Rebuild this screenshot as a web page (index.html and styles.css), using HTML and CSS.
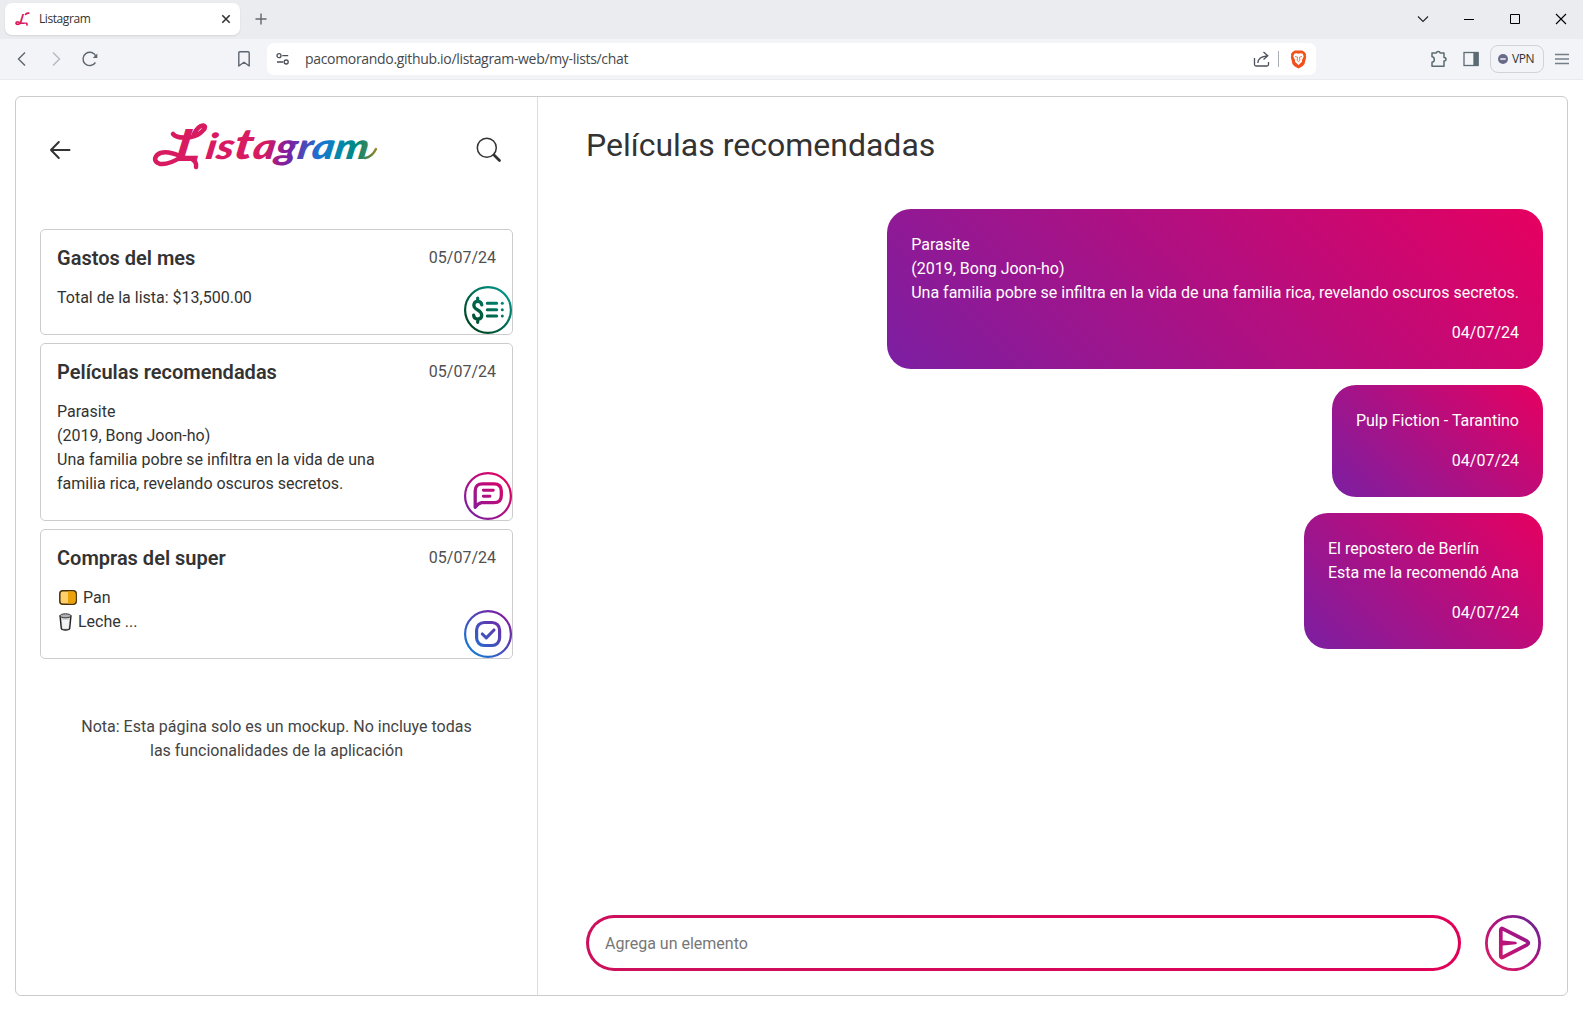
FILE: index.html
```html
<!DOCTYPE html>
<html lang="es">
<head>
<meta charset="utf-8">
<title>Listagram</title>
<link rel="stylesheet" href="styles.css">
</head>
<body>
<div class="tabstrip">
  <div class="tab">
    <svg class="favicon" width="16" height="16" viewBox="0 0 16 16" fill="none" stroke="#d81b60" stroke-width="1.7" stroke-linecap="round"><text class="mark" x="6" y="12.5" transform="skewX(-10)">L</text><path d="M13.8 2.2Q12 2 10.600 3.400M4 11.300Q1 10.300 1 12.200Q1.500 14.400 5.500 12.200M11 12.200Q12.300 12.500 12 14"/></svg>
    <span class="tab-title">Listagram</span>
    <svg width="10" height="10" viewBox="0 0 10 10" stroke="#333" stroke-width="1.6"><path d="M1.3 1.3L8.7 8.7M8.7 1.3L1.3 8.7"/></svg>
  </div>
  <svg class="newtab" width="12" height="12" viewBox="0 0 12 12" stroke="#62666d" stroke-width="1.4"><path d="M6 .5V11.5M.5 6H11.5"/></svg>
  <div class="window-controls">
    <svg width="12" height="12" viewBox="0 0 12 12" fill="none" stroke="#222" stroke-width="1.1"><path d="M1 3.5L6 8.5L11 3.5"/></svg>
    <svg width="12" height="12" viewBox="0 0 12 12" stroke="#000"><path d="M1 6.5H11"/></svg>
    <svg width="12" height="12" viewBox="0 0 12 12" fill="none" stroke="#000"><path d="M1.5 1.5H10.5V10.5H1.5Z"/></svg>
    <svg width="12" height="12" viewBox="0 0 12 12" stroke="#000" stroke-width="1.1"><path d="M1 1L11 11M11 1L1 11"/></svg>
  </div>
</div>
<div class="toolbar">
  <div class="nav">
    <svg width="16" height="16" viewBox="0 0 16 16" fill="none" stroke="#5d6570" stroke-width="1.4"><path d="M11 1.5L4.5 8L11 14.5"/></svg>
    <svg width="16" height="16" viewBox="0 0 16 16" fill="none" stroke="#b4b9c0" stroke-width="1.4"><path d="M5 1.5L11.5 8L5 14.5"/></svg>
    <svg width="16" height="16" viewBox="0 0 16 16" fill="none" stroke="#5d6570" stroke-width="1.4"><path d="M13.4 11.5A6.7 6.7 0 1 1 14 5.5"/><path d="M15.3 2.5V7H10.8Z" fill="#5d6570" stroke="none"/></svg>
  </div>
  <svg class="bookmark" width="14" height="16" viewBox="0 0 14 16" fill="none" stroke="#5d6570" stroke-width="1.4" stroke-linejoin="round"><path d="M1.8 2Q1.8 .8 3 .8H11Q12.2 .8 12.2 2V15L7 11.3L1.8 15Z"/></svg>
  <div class="address">
    <svg width="14" height="14" viewBox="0 0 14 14" fill="none" stroke="#4a4f57" stroke-width="1.3"><circle cx="3" cy="3.7" r="2"/><path d="M6.3 3.7H12.2M1 10H7.2"/><circle cx="10.2" cy="10" r="2"/></svg>
    <span class="url">pacomorando.github.io/listagram-web/my-lists/chat</span>
    <svg width="17" height="17" viewBox="0 0 17 17" fill="none" stroke="#4d525a" stroke-width="1.3"><path d="M1.5 7V13.5Q1.5 15 3 15H14Q15.5 15 15.5 13.5V11"/><path d="M4.8 12Q5 5.5 14.5 4.8M10.5 1L14.8 4.8L10.5 8.6"/></svg>
    <i class="divider"></i>
    <svg width="17" height="19" viewBox="0 0 17 19"><path d="M4 1L5 .4H12L13 1L14.5 2L16 4L15.8 6L16.2 7L14.5 14L12.5 16.3L8.5 18.6L4.5 16.3L2.500 14L.8 7L1.2 6L1 4L2.5 2Z" fill="#f1501b"/><path d="M4.2 3.8L6.500 3.300L8.500 3.800L10.500 3.300L12.800 3.800L13.700 6.500L12 10L12 11.800L8.500 15L5 11.800L5 10L3.300 6.500Z" fill="#fff"/><path d="M5 6.500L7.500 7.200L7.200 10.500L8.500 11.600L9.800 10.500L9.500 7.200L12 6.500" fill="none" stroke="#f1501b" stroke-width=".8"/></svg>
  </div>
  <div class="tools">
    <svg width="18" height="18" viewBox="0 0 18 18" fill="none" stroke="#5b6b72" stroke-width="1.5" stroke-linejoin="round"><path d="M2 3H6.3Q6.5 1.5 8.2 1.5T10.1 3H14V7.5Q16 7.5 16 9.2T14 11V16.2H2V12.3Q4.3 12 4.3 9.5T2 6.8Z"/></svg>
    <svg width="16" height="16" viewBox="0 0 16 16" fill="none" stroke="#5b6b72" stroke-width="1.3"><rect x="1" y="1.5" width="14" height="13"/><path d="M11 2H15V14H11Z" fill="#5b6b72"/></svg>
    <div class="vpn"><svg width="10" height="10" viewBox="0 0 10 10"><circle cx="5" cy="5" r="5" fill="#6a6a8b"/><path d="M2.3 5H7.7" stroke="#fff" stroke-width="1.4"/></svg><span>VPN</span></div>
    <svg width="14" height="12" viewBox="0 0 14 12" stroke="#747e88" stroke-width="1.3"><path d="M0 1.5H14M0 6H14M0 10.5H14"/></svg>
  </div>
</div>

<main class="app">
  <aside class="sidebar">
    <header class="brand">
      <svg class="back" width="22" height="20" viewBox="0 0 22 20" fill="none" stroke="#333" stroke-width="2" stroke-linecap="round" stroke-linejoin="round"><path d="M20.5 10H2M9.8 2L2 10L9.8 18"/></svg>
      <svg class="logo" width="228" height="52" viewBox="0 0 228 52">
        <defs><linearGradient id="rainbow" gradientUnits="userSpaceOnUse" x1="0" y1="0" x2="228" y2="0"><stop offset=".48" stop-color="#d81b60"/><stop offset=".59" stop-color="#7b1fa2"/><stop offset=".73" stop-color="#1976d2"/><stop offset=".82" stop-color="#0288a8"/><stop offset=".89" stop-color="#00897b"/><stop offset=".95" stop-color="#568243"/><stop offset="1" stop-color="#b58a20"/></linearGradient></defs>
        <g fill="none" stroke="url(#rainbow)" stroke-width="4.5" stroke-linecap="round">
          <path d="M42 13Q46 5 51 4.500Q55 5.500 51 9.500Q46 15 39 16M21 13Q25 18 39 16M28 35Q12 28 5 34Q0 40 8 43Q17 44 29 36M40 38Q45 41 44 46"/>
          <path d="M213 37Q220 36 224 28" stroke-width="2.5"/>
        </g>
        <g transform="translate(6.500 0) skewX(-9)">
          <text class="logo-cap" x="22" y="40" textLength="25" lengthAdjust="spacingAndGlyphs" fill="url(#rainbow)">L</text>
          <text class="logo-text" x="52" y="38" textLength="163" lengthAdjust="spacingAndGlyphs" fill="url(#rainbow)">is<tspan class="logo-tall">t</tspan>agram</text>
        </g>
      </svg>
      <svg class="search" width="26" height="26" viewBox="0 0 26 26" fill="none" stroke="#333" stroke-linecap="round"><circle cx="10.8" cy="10.8" r="9.5" stroke-width="1.5"/><path d="M18 18L23.5 23.5" stroke-width="2.8"/></svg>
    </header>

    <article class="card">
      <div class="card-head"><h2>Gastos del mes</h2><time>05/07/24</time></div>
      <p>Total de la lista: $13,500.00</p>
      <svg class="badge" width="48" height="48" viewBox="0 0 48 48" fill="none" stroke="url(#green)" stroke-linecap="round">
        <defs><linearGradient id="green" gradientUnits="userSpaceOnUse" x1="5" y1="43" x2="43" y2="5"><stop stop-color="#00401c"/><stop offset="1" stop-color="#009688"/></linearGradient></defs>
        <circle cx="24" cy="24" r="22.9" stroke-width="2.2"/>
        <path d="M17.8 19Q17.3 15.3 13.7 15.3T9.8 19Q9.8 22 13.7 24T17.8 29.5Q17.5 33 13.7 33T9.6 29.2M13.7 12V15M13.7 33.5V36.3" stroke-width="3.2"/>
        <path d="M23.3 17.3H32.7M23.3 23.7H32.7M23.3 30H32.7" stroke-width="3"/>
        <g fill="url(#green)" stroke="none"><circle cx="38.3" cy="17.3" r="1.5"/><circle cx="38.3" cy="23.7" r="1.5"/><circle cx="38.3" cy="30" r="1.5"/></g>
      </svg>
    </article>

    <article class="card">
      <div class="card-head"><h2>Películas recomendadas</h2><time>05/07/24</time></div>
      <p>Parasite<br>(2019, Bong Joon-ho)<br>Una familia pobre se infiltra en la vida de una<br>familia rica, revelando oscuros secretos.</p>
      <svg class="badge" width="48" height="48" viewBox="0 0 48 48" fill="none" stroke="url(#pink)" stroke-linecap="round" stroke-linejoin="round">
        <defs><linearGradient id="pink" gradientUnits="userSpaceOnUse" x1="5" y1="43" x2="43" y2="5"><stop stop-color="#7b1fa2"/><stop offset="1" stop-color="#e6005f"/></linearGradient></defs>
        <circle cx="24" cy="24" r="22.9" stroke-width="2.2"/>
        <path d="M11.2 35.3V19Q11.2 11.8 18.5 11.8H30Q37.3 11.8 37.3 19V23.5Q37.3 30.7 30 30.7H17.5Q14 31.5 11.2 35.3Z" stroke-width="3.3"/>
        <path d="M19.3 18.3H29.3M19.3 24.3H26" stroke-width="2.9"/>
      </svg>
    </article>

    <article class="card">
      <div class="card-head"><h2>Compras del super</h2><time>05/07/24</time></div>
      <p><svg class="bread" width="18" height="15" viewBox="0 0 18 15"><rect x=".8" y=".8" width="16.4" height="13.4" rx="3" fill="#ffd06a" stroke="#4a3208" stroke-width="1.5"/><path d="M9 1.5H14Q16.5 1.7 16.5 4.5V11Q16.3 13.5 14 13.5H9Z" fill="#e9a10c"/></svg>Pan<br><svg class="milk" width="13" height="18" viewBox="0 0 13 18"><path d="M1 2.5L2.3 15.5Q2.5 17 6.5 17T10.7 15.5L12 2.5" fill="#d5d5d7" stroke="#222" stroke-width="1.4"/><path d="M2.8 7H10.2L9.4 15Q6.5 16 3.6 15Z" fill="#f4f4f4"/><ellipse cx="6.5" cy="2.800" rx="5.5" ry="2" fill="#b0b2b8" stroke="#333"/></svg>Leche ...</p>
      <svg class="badge" width="48" height="48" viewBox="0 0 48 48" fill="none" stroke="url(#blue)" stroke-linecap="round" stroke-linejoin="round">
        <defs><linearGradient id="blue" gradientUnits="userSpaceOnUse" x1="7" y1="41" x2="41" y2="7"><stop stop-color="#1976d2"/><stop offset="1" stop-color="#7b1fa2"/></linearGradient></defs>
        <circle cx="24" cy="24" r="22.9" stroke-width="2.2"/>
        <rect x="12.6" y="12.5" width="23" height="23" rx="7.5" stroke-width="3.2"/>
        <path d="M18.3 24L22.3 27.9L30 20" stroke-width="3.1"/>
      </svg>
    </article>

    <p class="note">Nota: Esta página solo es un mockup. No incluye todas<br>las funcionalidades de la aplicación</p>
  </aside>

  <section class="chat">
    <h1>Películas recomendadas</h1>
    <div class="messages">
      <div class="bubble"><p>Parasite<br>(2019, Bong Joon-ho)<br>Una familia pobre se infiltra en la vida de una familia rica, revelando oscuros secretos.</p><time>04/07/24</time></div>
      <div class="bubble"><p>Pulp Fiction - Tarantino</p><time>04/07/24</time></div>
      <div class="bubble"><p>El repostero de Berlín<br>Esta me la recomendó Ana</p><time>04/07/24</time></div>
    </div>
    <div class="composer">
      <div class="field">Agrega un elemento</div>
      <svg width="56" height="56" viewBox="0 0 56 56" fill="none" stroke="url(#send)" stroke-linecap="round" stroke-linejoin="round">
        <defs><linearGradient id="send" gradientUnits="userSpaceOnUse" x1="6" y1="50" x2="50" y2="6"><stop stop-color="#d81b60"/><stop offset=".5" stop-color="#b3127f"/><stop offset="1" stop-color="#6f2294"/></linearGradient></defs>
        <circle cx="28" cy="28" r="26.6" stroke-width="2.8"/>
        <path d="M15.8 15Q15.8 12.7 18 13.8L42 26.2Q44.8 28 42 29.8L18 42.2Q15.8 43.3 15.8 41Z" stroke-width="3.7"/>
        <path d="M15.8 26.5L30.5 28L15.8 29.5Z" stroke-width="2.6" fill="#b3127f"/>
      </svg>
    </div>
  </section>
</main>
</body>
</html>
```

FILE: styles.css
```css
* { box-sizing: border-box; }
body {
  margin: 0;
  width: 1583px;
  height: 1011px;
  overflow: hidden;
  background: #fff;
  color: #333;
  font: 16px/24px Roboto, sans-serif;
}
svg { flex: none; overflow: visible; }
h1, h2, p { margin: 0; }

.tabstrip {
  display: flex;
  align-items: center;
  height: 39px;
  padding: 0 16px 1px 5px;
  background: #ebecf0;
}
.tab {
  display: flex;
  align-items: center;
  width: 235px;
  height: 32px;
  padding: 0 9px 0 10px;
  border-radius: 7px;
  background: #fff;
  box-shadow: 0 1px 2px rgba(0, 0, 0, .1);
}
.favicon .mark { font: italic bold 14px Lato, sans-serif; fill: #d81b60; stroke: none; }
.tab-title {
  flex: 1;
  padding-left: 8px;
  font: 12px/16px "Open Sans", "Noto Sans", sans-serif;
  letter-spacing: -.42px;
}
.newtab { margin-left: 15px; }
.window-controls { display: flex; gap: 34px; margin-left: auto; }

.toolbar {
  display: flex;
  align-items: center;
  height: 41px;
  padding: 0 14px;
  background: #f2f4f7;
  border-bottom: 1px solid #e9ebee;
}
.nav { display: flex; gap: 18px; }
.bookmark { margin-left: 139px; }
.address {
  display: flex;
  align-items: center;
  width: 1049px;
  height: 32px;
  margin-left: 16px;
  padding: 0 9px;
  border-radius: 7px;
  background: #fff;
}
.url {
  flex: 1;
  padding-left: 15px;
  color: #45484d;
  font: 14px/20px "Open Sans", "Noto Sans", sans-serif;
  letter-spacing: -.32px;
}
.divider { width: 1px; height: 16px; margin: 0 11px 0 8px; background: #aaadb3; }
.tools { display: flex; align-items: center; margin-left: auto; }
.tools > svg + svg { margin-left: 15px; }
.vpn {
  display: flex;
  align-items: center;
  gap: 4px;
  width: 54px;
  height: 28px;
  margin: 0 11px;
  padding-left: 7px;
  border: 1px solid #d0d3d8;
  border-radius: 8px;
  color: #333;
  font: 12px/16px "Open Sans", "Noto Sans", sans-serif;
  letter-spacing: -.4px;
}

.app {
  display: grid;
  grid-template-columns: 522px 1fr;
  width: 1553px;
  height: 900px;
  margin: 16px 0 0 15px;
  border: 1px solid #ccc;
  border-radius: 6px;
}
.sidebar {
  display: flex;
  flex-direction: column;
  gap: 8px;
  padding: 24px;
  border-right: 1px solid #ddd;
}
.brand {
  display: flex;
  align-items: flex-start;
  height: 100px;
  padding-left: 9px;
}
.back { margin-top: 19px; }
.logo { margin-left: 81px; }
.logo text { font-family: Lato, "Open Sans", sans-serif; font-style: italic; font-weight: 900; }
.logo .logo-cap { font-size: 44px; }
.logo .logo-text { font-size: 36px; }
.logo .logo-tall { font-size: 43px; }
.search { margin: 16px 0 0 96px; }

.card {
  position: relative;
  padding: 16px 16px 24px;
  border: 1px solid #ccc;
  border-radius: 5px;
}
.card-head { display: flex; justify-content: space-between; margin-bottom: 16px; }
.card-head h2 { font-size: 20px; font-weight: 600; line-height: 24px; }
.card-head time { color: #505050; line-height: 23px; }
.badge { position: absolute; right: 0; bottom: 0; }
.bread { margin: 0 6px 0 2px; vertical-align: -2px; }
.milk { margin: 0 6px 0 2px; vertical-align: -4px; }
.note { margin-top: 48px; color: #444; text-align: center; }

.chat {
  display: flex;
  flex-direction: column;
  padding: 24px 24px 24px 48px;
}
.chat h1 { height: 88px; font-size: 32px; font-weight: 400; line-height: 48px; }
.messages {
  display: flex;
  flex: 1;
  flex-direction: column;
  align-items: flex-end;
  gap: 16px;
}
.bubble {
  padding: 24px;
  border-radius: 24px;
  background: linear-gradient(45deg, #7b1fa2, #e60060);
  color: #fff;
}
.bubble time { display: block; margin-top: 16px; text-align: right; }
.composer { display: flex; gap: 24px; padding-right: 2px; }
.field {
  flex: 1;
  height: 56px;
  padding: 0 16px;
  border: 3px solid transparent;
  border-radius: 28px;
  background: linear-gradient(#fff, #fff) padding-box, linear-gradient(90deg, #cc105c, #e00058) border-box;
  color: #777;
  line-height: 52px;
}
```
